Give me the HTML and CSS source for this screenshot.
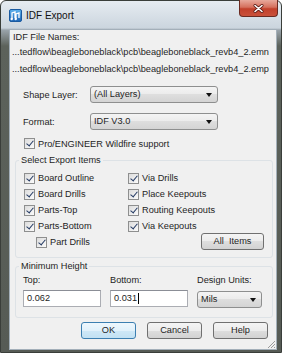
FILE: index.html
```html
<!DOCTYPE html>
<html lang="en">
<head>
  <meta charset="UTF-8">
  <title>IDF Export</title>
  <link rel="stylesheet" href="styles.css">
</head>
<body>
  <div class="window">
    <div class="titlebar">
      <svg class="app-icon" width="13" height="13" viewBox="0 0 13 13">
        <defs>
          <linearGradient id="ig" x1="0" y1="0" x2="0" y2="1">
            <stop offset="0" stop-color="#5fb3ee"/>
            <stop offset="1" stop-color="#1c64b4"/>
          </linearGradient>
        </defs>
        <rect x="0.5" y="0.5" width="12" height="12" rx="1.5" fill="url(#ig)" stroke="#1a5aa0"/>
        <path d="M3 10 V4 L6 3 V9 M7 10 V5 L10 4 V9" stroke="#fff" stroke-width="1.3" fill="none"/>
        <circle cx="2.7" cy="10" r="1.2" fill="#fff"/>
        <circle cx="6.7" cy="10" r="1.2" fill="#fff"/>
      </svg>
      <span class="title">IDF Export</span>
      <div class="close-btn">
        <svg width="11" height="9" viewBox="0 0 11 9">
          <path d="M2 1.5 L9 7.5 M9 1.5 L2 7.5" stroke="#5a1a14" stroke-width="3" stroke-linecap="round"/>
          <path d="M2 1.5 L9 7.5 M9 1.5 L2 7.5" stroke="#fff" stroke-width="1.6" stroke-linecap="round"/>
        </svg>
      </div>
    </div>

    <div class="client">
      <div class="text-line names">IDF File Names:</div>
      <div class="text-line path">...tedflow\beagleboneblack\pcb\beagleboneblack_revb4_2.emn</div>
      <div class="text-line path second">...tedflow\beagleboneblack\pcb\beagleboneblack_revb4_2.emp</div>

      <div class="field-row shape-row">
        <span class="field-label">Shape Layer:</span>
        <div class="combo wide">(All Layers)<span class="arrow"></span></div>
      </div>
      <div class="field-row format-row">
        <span class="field-label">Format:</span>
        <div class="combo wide">IDF V3.0<span class="arrow"></span></div>
      </div>

      <div class="check pro-check"><span class="box"></span>Pro/ENGINEER Wildfire support</div>

      <fieldset class="group export-group">
        <legend>Select Export Items</legend>
        <div class="items">
          <div class="check"><span class="box"></span>Board Outline</div>
          <div class="check"><span class="box"></span>Via Drills</div>
          <div class="check"><span class="box"></span>Board Drills</div>
          <div class="check"><span class="box"></span>Place Keepouts</div>
          <div class="check"><span class="box"></span>Parts-Top</div>
          <div class="check"><span class="box"></span>Routing Keepouts</div>
          <div class="check"><span class="box"></span>Parts-Bottom</div>
          <div class="check"><span class="box"></span>Via Keepouts</div>
          <div class="check indent"><span class="box"></span>Part Drills</div>
          <div class="btn all-btn">All&nbsp; Items</div>
        </div>
      </fieldset>

      <fieldset class="group height-group">
        <legend>Minimum Height</legend>
        <div class="height-grid">
          <span class="field-label">Top:</span>
          <span class="field-label">Bottom:</span>
          <span class="field-label">Design Units:</span>
          <div class="input">0.062</div>
          <div class="input">0.031<span class="caret"></span></div>
          <div class="combo units">Mils<span class="arrow"></span></div>
        </div>
      </fieldset>

      <div class="buttons">
        <div class="btn default">OK</div>
        <div class="btn">Cancel</div>
        <div class="btn">Help</div>
      </div>

      <svg class="grip" width="9" height="9" viewBox="0 0 9 9">
        <path d="M8 1 L1 8 M8 4 L4 8 M8 7 L7 8" stroke="#9a9a9a" stroke-width="1"/>
      </svg>
    </div>
  </div>
</body>
</html>
```

FILE: styles.css
```css
/* Dialog frame */
body {
  margin: 0;
  background: #fff;
  font-family: "Liberation Sans", Arial, sans-serif;
  font-size: 9.2px;
  color: #1e1e1e;
}

.window {
  width: 282px;
  height: 353px;
  box-sizing: border-box;
  padding: 0 4px 2px 8px;
  border: 1px solid #3a3e3a;
  border-radius: 6px 6px 0 0;
  background: linear-gradient(to bottom, #e6ecf1 0, #cbd5de 27px, #9aa4ab 29px, #5c625b 45px, #565b55 100%);
  display: flex;
  flex-direction: column;
}

.titlebar {
  height: 28px;
  display: flex;
  align-items: center;
}

.app-icon {
  flex: none;
}

.title {
  margin-left: 4px;
  font-size: 10px;
  color: #111;
}

.close-btn {
  margin-left: auto;
  margin-right: -1px;
  align-self: flex-start;
  margin-top: -1px;
  width: 39px;
  height: 17px;
  box-sizing: border-box;
  border: 1px solid #6b2a21;
  border-top: none;
  border-radius: 0 0 4px 4px;
  background: linear-gradient(to bottom, #e8a99c 0, #d5705d 45%, #c2402b 55%, #c9513a 100%);
  display: flex;
  align-items: center;
  justify-content: center;
}

.client {
  position: relative;
  flex: 1;
  border: 1px solid #a3afb9;
  background: #f0f0f0;
  display: flex;
  flex-direction: column;
}

.grip {
  position: absolute;
  right: 0;
  bottom: 0;
}

/* Text rows */
.text-line {
  line-height: 15px;
  white-space: nowrap;
}

.names {
  padding-left: 3px;
}

.path {
  padding-left: 2px;
}

.path.second {
  margin-top: 2px;
}

.field-row {
  display: flex;
  align-items: center;
  padding-left: 13px;
  height: 17px;
}

.shape-row {
  margin-top: 9px;
}

.format-row {
  margin-top: 10px;
}

.field-row .field-label {
  width: 67px;
}

.combo {
  position: relative;
  height: 17px;
  box-sizing: border-box;
  border: 1px solid #8e8f8f;
  border-radius: 3px;
  background: linear-gradient(to bottom, #f4f4f4 0, #ebebeb 50%, #dedede 50%, #d4d4d4 100%);
  padding-left: 3px;
  line-height: 15px;
}

.combo.wide {
  width: 128px;
}

.arrow {
  position: absolute;
  right: 5px;
  top: 6px;
  border-left: 3.5px solid transparent;
  border-right: 3.5px solid transparent;
  border-top: 4px solid #111;
}

/* Checkboxes */
.check {
  display: flex;
  align-items: center;
  height: 16px;
  white-space: nowrap;
}

.box {
  width: 11px;
  height: 11px;
  box-sizing: border-box;
  border: 1px solid #8e8f8f;
  background: linear-gradient(135deg, #dcdcdc, #fbfbfb);
  margin-right: 3px;
  position: relative;
  flex: none;
}

.box::after {
  content: "";
  position: absolute;
  left: 3px;
  top: 0px;
  width: 3px;
  height: 6px;
  border-right: 1.5px solid #243a64;
  border-bottom: 1.5px solid #243a64;
  transform: rotate(40deg);
}

.pro-check {
  margin-top: 6px;
  margin-left: 14px;
  height: 15px;
}

/* Group boxes */
.group {
  margin: 0 3px 0 5px;
  padding: 0 8px 7px 3px;
  border: 1px solid #dde2e6;
  border-radius: 3px;
  min-width: 0;
}

.group legend {
  padding: 0 2px;
  line-height: 15px;
}

.export-group {
  margin-top: 2px;
}

.items {
  margin-left: 5px;
  padding-top: 2px;
  display: grid;
  grid-template-columns: 104px 1fr;
  grid-auto-rows: 16px;
}

.check.indent {
  padding-left: 12px;
}

.all-btn {
  justify-self: end;
  width: 63px;
  margin-top: -1px;
}

.height-group {
  margin-top: 1px;
  padding-bottom: 10px;
}

.height-grid {
  margin-left: 4px;
  padding-top: 1px;
  display: grid;
  grid-template-columns: 87px 87px 65px;
  grid-template-rows: 15px 17px;
}

.input {
  width: 78px;
  height: 17px;
  box-sizing: border-box;
  border: 1px solid #abadb3;
  border-top-color: #8b8e96;
  background: #fff;
  padding-left: 3px;
  line-height: 15px;
  display: flex;
  align-items: center;
}

.caret {
  width: 1px;
  height: 11px;
  background: #000;
  margin-left: 1px;
}

.combo.units {
  width: 65px;
  margin-top: 1px;
}

/* Buttons */
.btn {
  height: 17px;
  box-sizing: border-box;
  border: 1px solid #707070;
  border-radius: 3px;
  background: linear-gradient(to bottom, #f4f4f4 0, #ececec 50%, #dedede 50%, #d2d2d2 100%);
  text-align: center;
  line-height: 15px;
}

.btn.default {
  border-color: #3c7fb1;
  background: linear-gradient(to bottom, #eef7fd 0, #e1f1fb 50%, #cfe8f7 50%, #c2e1f3 100%);
}

.buttons {
  margin-top: 4px;
  padding-right: 8px;
  display: flex;
  justify-content: flex-end;
  gap: 11px;
}

.buttons .btn {
  width: 55px;
}
```
